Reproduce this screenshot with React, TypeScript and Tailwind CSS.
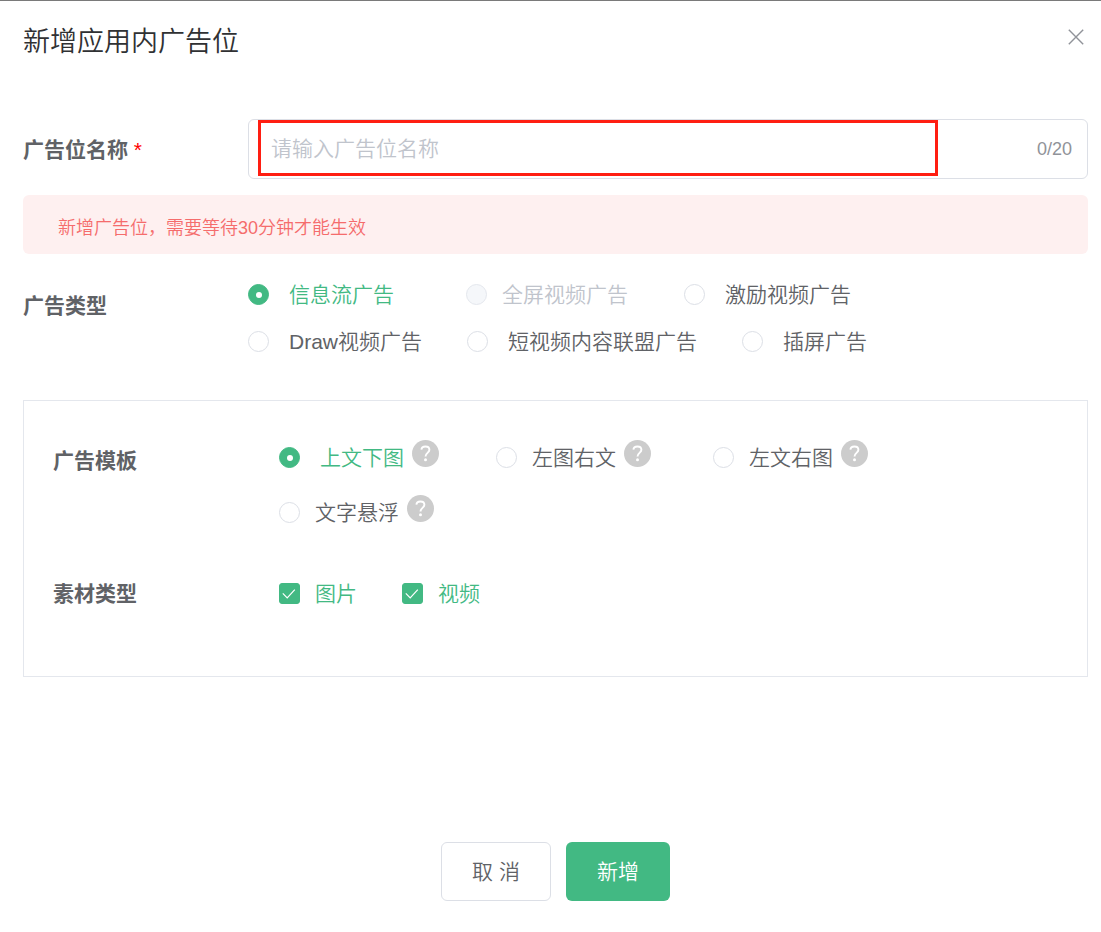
import { useState } from "react";
import type { ReactNode } from "react";

const green = "has-[:checked]:text-[#42b983]";

function HelpButton({ label }: { label: string }) {
  return (
    <button type="button" aria-label={label} className="mb-2 size-[27px] shrink-0">
      <svg viewBox="0 0 27 27" className="block size-full">
        <circle cx="13.5" cy="13.5" r="13.5" fill="#cccccc" />
        <path
          d="M9.4 9.7C9.6 7.6 11.3 6.5 13.4 6.5c2.3 0 4 1.3 4 3.3 0 3-3.9 3.2-3.9 6.6"
          fill="none"
          stroke="#ffffff"
          strokeWidth="1.9"
        />
        <circle cx="13.5" cy="19.7" r="1.5" fill="#ffffff" />
      </svg>
    </button>
  );
}

interface Option {
  label: string;
  disabled?: boolean;
  tight?: boolean;
}

function Radio({
  name,
  option,
  checked,
  onSelect,
  children,
}: {
  name: string;
  option: Option;
  checked: boolean;
  onSelect: () => void;
  children?: ReactNode;
}) {
  return (
    <div className="flex min-w-[173px] items-center gap-2">
      <label
        className={`flex items-center ${option.tight ? "gap-[15px]" : "gap-5"} ${
          option.disabled ? "text-[#c0c4cc]" : green
        }`}
      >
        <input
          type="radio"
          name={name}
          checked={checked}
          disabled={option.disabled}
          onChange={onSelect}
          className="grid size-[21px] shrink-0 appearance-none place-items-center rounded-full border border-[#dcdfe6] bg-white before:size-[6px] before:rounded-full before:bg-white checked:border-[#42b983] checked:bg-[#42b983] disabled:border-[#e4e7ed] disabled:bg-[#f5f7fa] disabled:before:bg-transparent"
        />
        <span className="whitespace-nowrap">{option.label}</span>
      </label>
      {children}
    </div>
  );
}

function Checkbox({ label }: { label: string }) {
  return (
    <label className={`flex items-center gap-[15px] ${green}`}>
      <span className="relative size-[21px]">
        <input
          type="checkbox"
          defaultChecked
          className="peer block size-full appearance-none rounded-[3px] border border-[#dcdfe6] bg-white checked:border-[#42b983] checked:bg-[#42b983]"
        />
        <svg
          viewBox="0 0 21 21"
          className="pointer-events-none absolute inset-0 hidden peer-checked:block"
          fill="none"
          stroke="#ffffff"
          strokeWidth="1.2"
        >
          <path d="M3.8 10.4 8.2 14.8 15.8 6.6" />
        </svg>
      </span>
      {label}
    </label>
  );
}

const adTypes: Option[] = [
  { label: "信息流广告" },
  { label: "全屏视频广告", disabled: true, tight: true },
  { label: "激励视频广告" },
  { label: "Draw视频广告" },
  { label: "短视频内容联盟广告" },
  { label: "插屏广告" },
];

const templates: Option[] = [
  { label: "上文下图" },
  { label: "左图右文", tight: true },
  { label: "左文右图", tight: true },
  { label: "文字悬浮", tight: true },
];

export default function App() {
  const [name, setName] = useState("");
  const [adType, setAdType] = useState("信息流广告");
  const [template, setTemplate] = useState("上文下图");

  return (
    <main className="min-h-screen border-t border-[#7a7a7a] bg-white pt-5 pr-[13px] pb-[31px] pl-[23px] font-['Liberation_Sans','Noto_Sans_CJK_SC',sans-serif] text-[21px] leading-[31px] font-[350] text-[#606266]">
      <header className="flex items-start justify-between">
        <h1 className="text-[27px] leading-[42px] font-[350] text-[#303133]">新增应用内广告位</h1>
        <button type="button" aria-label="关闭" className="mt-1 p-1">
          <svg viewBox="0 0 16 16" className="block size-4" fill="none" stroke="#909399" strokeWidth="1.4">
            <path d="M.8.8 15.2 15.2M15.2.8.8 15.2" />
          </svg>
        </button>
      </header>

      <form onSubmit={(e) => e.preventDefault()}>
        <div className="mt-14 flex items-center">
          <label htmlFor="slot-name" className="w-[225px] shrink-0 font-bold">
            广告位名称 <span className="font-normal text-[#ff0000]">*</span>
          </label>
          <div className="relative flex h-[60px] flex-1 items-center rounded-md border border-[#dcdfe6] pr-[15px] pl-[22px]">
            <input
              id="slot-name"
              type="text"
              maxLength={20}
              value={name}
              onChange={(e) => setName(e.target.value)}
              placeholder="请输入广告位名称"
              className="h-full min-w-0 flex-1 outline-none placeholder:text-[#c0c4cc]"
            />
            <span className="text-lg text-[#909399]">{name.length}/20</span>
            <span className="pointer-events-none absolute top-0 right-[149px] bottom-[2px] left-[9px] border-[3px] border-[#ff1e12]" />
          </div>
        </div>

        <p role="alert" className="mt-4 rounded-md bg-[#fef0f0] pt-5 pb-3 pl-[35px] text-lg leading-[27px] text-[#f56c6c]">
          新增广告位，需要等待30分钟才能生效
        </p>

        <div role="radiogroup" aria-labelledby="ad-type-title" className="mt-[25px] flex items-start">
          <span id="ad-type-title" className="mt-[11px] w-[225px] shrink-0 font-bold">
            广告类型
          </span>
          <div className="flex max-w-[760px] flex-wrap gap-x-[45px] gap-y-4">
            {adTypes.map((o) => (
              <Radio
                key={o.label}
                name="ad-type"
                option={o}
                checked={adType === o.label}
                onSelect={() => setAdType(o.label)}
              />
            ))}
          </div>
        </div>

        <section className="mt-[43px] border border-[#e4e7ed] px-[29px] pt-[39px] pb-[67px]">
          <div role="radiogroup" aria-labelledby="template-title" className="flex items-start">
            <span id="template-title" className="mt-[5px] w-[226px] shrink-0 font-bold">
              广告模板
            </span>
            <div className="flex flex-wrap gap-x-11 gap-y-5">
              {templates.map((o) => (
                <Radio
                  key={o.label}
                  name="template"
                  option={o}
                  checked={template === o.label}
                  onSelect={() => setTemplate(o.label)}
                >
                  <HelpButton label={`${o.label}说明`} />
                </Radio>
              ))}
            </div>
          </div>
          <div role="group" aria-labelledby="material-title" className="mt-12 flex items-center">
            <span id="material-title" className="w-[226px] shrink-0 font-bold">
              素材类型
            </span>
            <div className="flex gap-[45px]">
              <Checkbox label="图片" />
              <Checkbox label="视频" />
            </div>
          </div>
        </section>

        <footer className="mt-[165px] flex justify-center gap-[15px]">
          <button type="button" className="h-[59px] rounded-md border border-[#dcdfe6] px-[30px]">
            取 消
          </button>
          <button type="submit" className="h-[59px] rounded-md bg-[#42b983] px-[31px] text-white">
            新增
          </button>
        </footer>
      </form>
    </main>
  );
}
